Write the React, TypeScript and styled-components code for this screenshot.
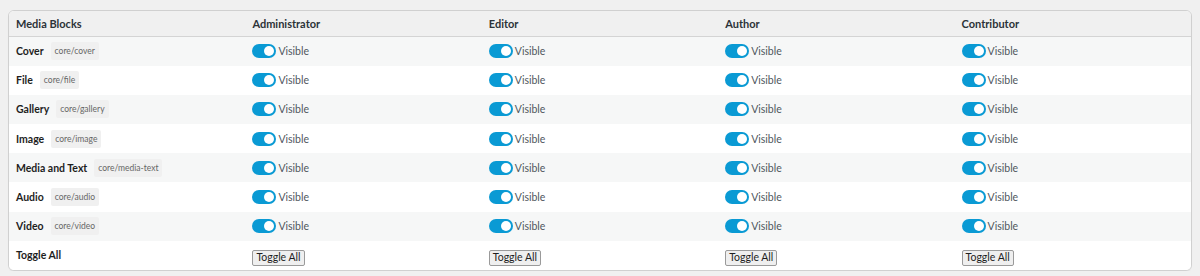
import styled, { createGlobalStyle } from 'styled-components';

const GlobalStyle = createGlobalStyle`
  body {
    margin: 0;
    padding: 10px 8px 0 8px;
    background: #f0f0f0;
    font-family: Lato, "Noto Sans", sans-serif;
    color: #1e1e1e;
  }
`;

const Card = styled.div`
  background: #fff;
  border: 1px solid #d0d0d0;
  border-radius: 6px;
  overflow: hidden;
  box-shadow: 0 1px 1px rgba(0, 0, 0, 0.04);
`;

const Table = styled.table`
  width: 100%;
  border-collapse: collapse;
  table-layout: fixed;
`;

const HeadCell = styled.th`
  text-align: left;
  font-size: 11px;
  font-weight: 700;
  color: #2c3338;
  padding: 0 7px;
  height: 25px;
  background: #f0f0f0;
  border-bottom: 1px solid #d4d4d4;
`;

const Row = styled.tr<{ $alt?: boolean }>`
  background: ${(p) => (p.$alt ? '#f6f7f7' : '#fff')};
  height: 29.2px;
`;

const Cell = styled.td`
  padding: 0 7px;
  vertical-align: middle;
`;

const BlockName = styled.div`
  display: flex;
  align-items: center;
  gap: 7px;
  font-size: 10.5px;
  font-weight: 700;
  color: #1e1e1e;
`;

const Code = styled.code`
  font-family: Lato, "Noto Sans", sans-serif;
  font-size: 8.5px;
  font-weight: 400;
  color: #666;
  background: #f0f0f0;
  padding: 4px 4px;
  border-radius: 2px;
`;

const ToggleWrap = styled.label`
  display: flex;
  align-items: center;
  gap: 2px;
  font-size: 10.5px;
  color: #50575e;
`;

const Track = styled.span<{ $on: boolean }>`
  position: relative;
  display: inline-block;
  width: 24px;
  height: 14px;
  border-radius: 7px;
  background: ${(p) => (p.$on ? '#0a9ad4' : '#ccc')};
`;

const Knob = styled.span<{ $on: boolean }>`
  position: absolute;
  top: 2px;
  left: ${(p) => (p.$on ? '12px' : '2px')};
  width: 10px;
  height: 10px;
  border-radius: 50%;
  background: #fff;
`;

const ToggleAllBtn = styled.button`
  font-family: Lato, "Noto Sans", sans-serif;
  font-size: 10.5px;
  color: #1e1e1e;
  background: #efefef;
  border: 1px solid #9a9a9a;
  border-radius: 2px;
  padding: 0 3px;
  height: 16px;
  line-height: 13px;
`;

const roles = ['Administrator', 'Editor', 'Author', 'Contributor'];

const blocks = [
  { name: 'Cover', code: 'core/cover' },
  { name: 'File', code: 'core/file' },
  { name: 'Gallery', code: 'core/gallery' },
  { name: 'Image', code: 'core/image' },
  { name: 'Media and Text', code: 'core/media-text' },
  { name: 'Audio', code: 'core/audio' },
  { name: 'Video', code: 'core/video' },
];

function Toggle({ on }: { on: boolean }) {
  return (
    <ToggleWrap>
      <Track $on={on}>
        <Knob $on={on} />
      </Track>
      <span>Visible</span>
    </ToggleWrap>
  );
}

export default function App() {
  return (
    <>
      <GlobalStyle />
      <Card>
        <Table>
          <thead>
            <tr>
              <HeadCell>Media Blocks</HeadCell>
              {roles.map((r) => (
                <HeadCell key={r}>{r}</HeadCell>
              ))}
            </tr>
          </thead>
          <tbody>
            {blocks.map((b, i) => (
              <Row key={b.code} $alt={i % 2 === 0}>
                <Cell>
                  <BlockName>
                    {b.name}
                    <Code>{b.code}</Code>
                  </BlockName>
                </Cell>
                {roles.map((r) => (
                  <Cell key={r}>
                    <Toggle on />
                  </Cell>
                ))}
              </Row>
            ))}
            <Row>
              <Cell>
                <BlockName>Toggle All</BlockName>
              </Cell>
              {roles.map((r) => (
                <Cell key={r}>
                  <ToggleAllBtn>Toggle All</ToggleAllBtn>
                </Cell>
              ))}
            </Row>
          </tbody>
        </Table>
      </Card>
    </>
  );
}
